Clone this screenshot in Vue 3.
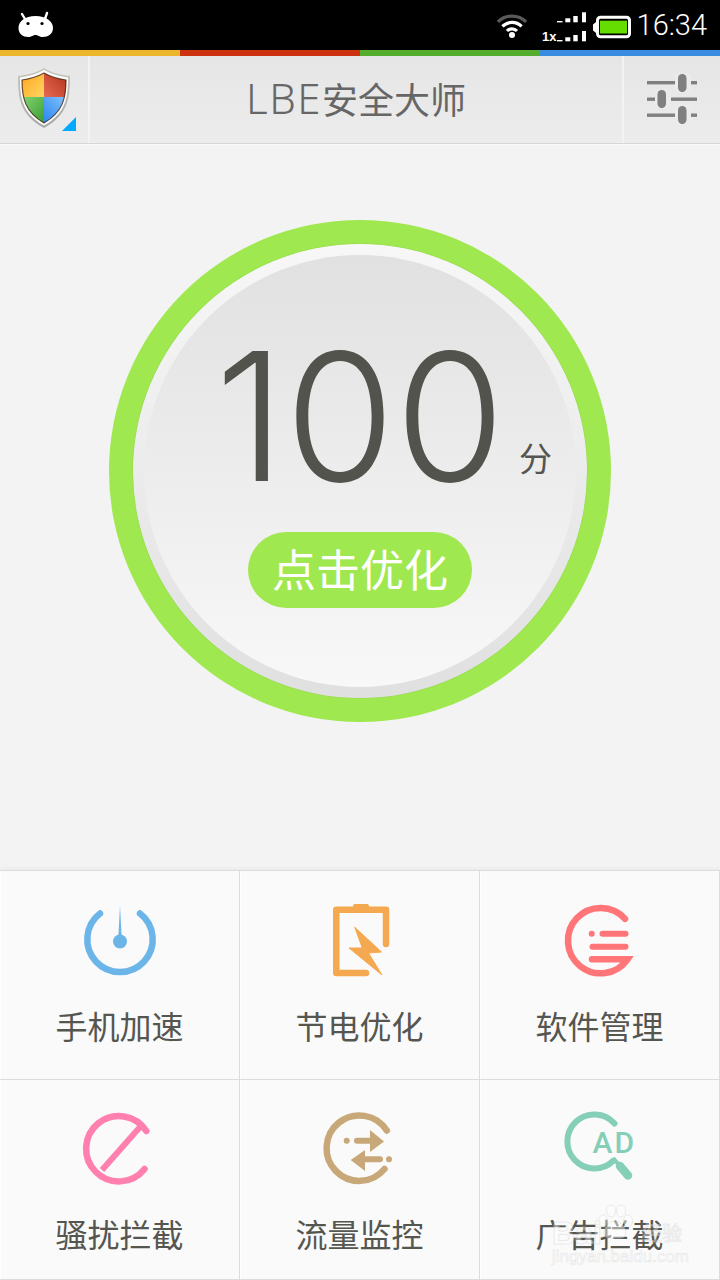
<template>
  <div class="phone">
    <div class="status-bar">
      <svg class="droid" width="36" height="28" viewBox="0 0 36 28">
        <path d="M7 8 4 3M27 8l2-6" stroke="#fff" stroke-width="2.4" stroke-linecap="round" />
        <path d="M.5 17C.5 10 7 5 17.5 5S35 10 35 17c0 6-5 9-10 9-4 0-5-2-7.500-2S14 26 10 26C5 26 .5 23 .5 17Z" fill="#fff" />
        <circle cx="10" cy="12.500" r="1.600" fill="#000" />
        <circle cx="24" cy="12.500" r="1.600" fill="#000" />
      </svg>
      <svg class="wifi" width="34" height="26" viewBox="0 0 34 26" fill="none" stroke-width="3.200">
        <path d="M2.900 8.900a20 20 0 0 1 28.200 0" stroke="#5a5a5a" />
        <path d="M7.400 13.400a13.500 13.500 0 0 1 19.200 0" stroke="#fff" />
        <path d="M12 18a7 7 0 0 1 10 0" stroke="#fff" />
        <circle cx="17" cy="22" r="3" fill="#fff" />
      </svg>
      <svg class="signal" width="45" height="34" viewBox="0 0 45 34" fill="#fff">
        <rect x="15" y="9" width="5.500" height="1.400" />
        <rect x="23.300" y="6.300" width="5" height="4" />
        <rect x="31.300" y="4" width="4.400" height="6.300" />
        <rect x="40" y="0.300" width="4" height="10" />
        <rect x="15" y="28" width="5.500" height="1.400" />
        <rect x="23.300" y="25.300" width="5" height="4" />
        <rect x="31.300" y="23" width="4.400" height="6.300" />
        <rect x="40" y="19" width="4" height="10.300" />
        <text x="0" y="29" class="signal-label">1x</text>
      </svg>
      <svg class="battery" width="38" height="24" viewBox="0 0 38 24">
        <path d="M0 9.500 3 7v11l-3-2.500Z" fill="#fff" />
        <rect x="4.500" y="2.200" width="32" height="19.600" rx="3" fill="none" stroke="#fff" stroke-width="3" />
        <rect x="7" y="5.700" width="27" height="12.800" fill="#66dd00" />
      </svg>
      <span class="clock">16:34</span>
    </div>

    <div class="color-strip">
      <i class="yellow"></i><i class="red"></i><i class="green"></i><i class="blue"></i>
    </div>

    <header class="app-header">
      <div class="logo-btn">
        <svg width="52" height="60" viewBox="0 0 52 60">
          <defs>
            <linearGradient id="rim" x1="0" y1="0" x2="0" y2="1">
              <stop offset="0" stop-color="#c8c8c0" />
              <stop offset="1" stop-color="#a8a8a8" />
            </linearGradient>
            <linearGradient id="q1" x1="0" y1="0" x2="1" y2="1">
              <stop offset="0" stop-color="#ff9a10" />
              <stop offset="1" stop-color="#ffd763" />
            </linearGradient>
            <linearGradient id="q2" x1="1" y1="0" x2="0" y2="1">
              <stop offset="0" stop-color="#a92810" />
              <stop offset="1" stop-color="#e86a52" />
            </linearGradient>
            <linearGradient id="q3" x1="0" y1="0" x2="1" y2="1">
              <stop offset="0" stop-color="#8ad878" />
              <stop offset="1" stop-color="#33982c" />
            </linearGradient>
            <linearGradient id="q4" x1="1" y1="0" x2="0" y2="1">
              <stop offset="0" stop-color="#8cc8ff" />
              <stop offset="1" stop-color="#2080ee" />
            </linearGradient>
            <clipPath id="shield-clip">
              <path d="M26 5C33 9 41 11 48 12 48 30 45 44 26 55 7 44 4 30 4 12 11 11 19 9 26 5Z" />
            </clipPath>
          </defs>
          <path d="M26 0C34 5 43 7 52 8 52 30 50 47 26 60 2 47 0 30 0 8 9 7 18 5 26 0Z" fill="url(#rim)" />
          <path d="M26 2C34 6.500 42 8.500 50 9.500 50 30 48 45 26 57.500 4 45 2 30 2 9.500 10 8.500 18 6.500 26 2Z" fill="#fff" />
          <g clip-path="url(#shield-clip)">
            <rect x="0" y="0" width="26" height="29" fill="url(#q1)" />
            <rect x="26" y="0" width="26" height="29" fill="url(#q2)" />
            <rect x="0" y="29" width="26" height="31" fill="url(#q3)" />
            <rect x="26" y="29" width="26" height="31" fill="url(#q4)" />
          </g>
          <path d="M26 5C33 9 41 11 48 12 48 30 45 44 26 55 7 44 4 30 4 12 11 11 19 9 26 5Z" fill="none" stroke="#3a1a08" stroke-opacity=".75" stroke-width="1.200" />
        </svg>
        <span class="corner"></span>
      </div>
      <h1 class="app-title"><span class="latin">LBE</span>安全大师</h1>
      <div class="settings-btn">
        <svg width="50" height="52" viewBox="0 0 50 52" fill="#808080">
          <rect x="0" y="7" width="50" height="3.400" />
          <rect x="0" y="23.500" width="50" height="3.400" />
          <rect x="0" y="39.500" width="50" height="3.400" />
          <rect x="28" y="0" width="16" height="18" fill="#ebebeb" />
          <rect x="8" y="16" width="16" height="18" fill="#ebebeb" />
          <rect x="28" y="32" width="16" height="18" fill="#ebebeb" />
          <rect x="31" y="0" width="8.500" height="18" rx="4.200" />
          <rect x="10.500" y="16" width="8.500" height="18" rx="4.200" />
          <rect x="31" y="32" width="8.500" height="18" rx="4.200" />
        </svg>
      </div>
    </header>

    <main class="score-panel">
      <div class="ring">
        <div class="disc-outer">
          <div class="disc-inner">
            <div class="score-row">
              <span></span>
              <span class="score">100</span>
              <span class="unit">分</span>
            </div>
            <div class="optimize-btn">点击优化</div>
          </div>
        </div>
      </div>
    </main>

    <section class="tools">
      <div v-for="tool in tools" :key="tool.key" class="tool">
        <svg class="tool-icon" width="80" height="80" viewBox="0 0 80 80" fill="none" stroke-width="6.500" stroke-linecap="round" :style="{ color: tool.color }">
          <template v-if="tool.key === 'boost'">
            <path d="M20 13.500a32.700 32.700 0 1 0 40 0" stroke="currentColor" />
            <path d="M40 6l1.600 30h-3.200Z" fill="currentColor" />
            <circle cx="40" cy="41.500" r="7" fill="currentColor" />
          </template>
          <template v-else-if="tool.key === 'power'">
            <path d="M66 44V9.700H16.300V73H46" stroke="currentColor" stroke-linejoin="round" />
            <rect x="33" y="4" width="16" height="5" rx="2" fill="currentColor" />
            <path d="M35 27.500 61.500 52l-13 1L62 75 29 48h13Z" fill="currentColor" stroke="currentColor" stroke-width="1" stroke-linejoin="round" />
          </template>
          <template v-else-if="tool.key === 'apps'">
            <path d="M65 18.800A32.700 32.700 0 1 0 67.500 59.300H32" stroke="currentColor" />
            <circle cx="31.700" cy="33.700" r="3" fill="currentColor" />
            <path d="M42.500 33.700h23M32.500 46.700h33" stroke="currentColor" stroke-width="6" />
          </template>
          <template v-else-if="tool.key === 'block'">
            <path d="M66.300 23A32.700 32.700 0 1 0 64.500 61" stroke="currentColor" />
            <path d="M60 19 22 62" stroke="currentColor" stroke-linecap="butt" stroke-width="6" />
          </template>
          <template v-else-if="tool.key === 'traffic'">
            <path d="M66.800 22.500A32.700 32.700 0 1 0 64.500 61" stroke="currentColor" />
            <circle cx="26.700" cy="32.700" r="3" fill="currentColor" />
            <path d="M37 32.700h14M60 51.300H44" stroke="currentColor" stroke-width="6" />
            <path d="M50 22l14 11.500-14 10.500ZM45 42 30.700 52 45 63Z" fill="currentColor" />
            <circle cx="69" cy="51.300" r="3" fill="currentColor" />
          </template>
          <template v-else>
            <path d="M54.500 15.500A27 27 0 1 0 53 53" stroke="currentColor" stroke-width="6" />
            <path d="M53 50 60 58" stroke="currentColor" stroke-width="4" stroke-linecap="butt" />
            <path d="M60 58 68 67.500" stroke="currentColor" stroke-width="8.500" />
            <text x="32.500" y="45" class="ad-label" fill="currentColor">AD</text>
          </template>
        </svg>
        <span class="tool-name">{{ tool.name }}</span>
      </div>

      <div class="watermark">
        <svg class="paw" width="40" height="36" viewBox="0 0 40 36" fill="#fff" stroke="#d8d8d8">
          <ellipse cx="8" cy="17" rx="4.500" ry="6" />
          <ellipse cx="16" cy="7" rx="4.500" ry="6" />
          <ellipse cx="26" cy="7" rx="4.500" ry="6" />
          <ellipse cx="33" cy="17" rx="4.500" ry="6" />
          <path d="M20 17c6 0 11 7 11 12 0 6-7 5-11 5s-11 1-11-5c0-5 5-12 11-12Z" />
        </svg>
        <div class="wm-brand"><span>Bai</span><em>经验</em></div>
        <div class="wm-url">jingyan.baidu.com</div>
      </div>
    </section>
  </div>
</template>

<script setup>
const tools = [
  { key: 'boost', name: '手机加速', color: '#6bb5e8' },
  { key: 'power', name: '节电优化', color: '#f4a950' },
  { key: 'apps', name: '软件管理', color: '#ff7578' },
  { key: 'block', name: '骚扰拦截', color: '#ff80ae' },
  { key: 'traffic', name: '流量监控', color: '#c8a878' },
  { key: 'ads', name: '广告拦截', color: '#85ceb8' }
]
</script>

<style>
html, body {
  margin: 0;
  background: #f3f3f3;
}
</style>

<style scoped>
.phone {
  width: 720px;
  height: 1280px;
  display: flex;
  flex-direction: column;
  overflow: hidden;
  font-family: "Noto Sans CJK SC", "Liberation Sans", sans-serif;
  background: #f3f3f3;
}

.status-bar {
  height: 50px;
  flex: none;
  background: #000;
  display: flex;
  align-items: center;
  padding: 0 13px 0 18px;
  box-sizing: border-box;
}

.droid {
  margin-top: -1px;
}

.wifi {
  margin-left: auto;
  margin-top: 1px;
}

.signal {
  margin-left: 13px;
  margin-top: 7px;
}

.signal-label {
  font: bold 13px "Liberation Sans", sans-serif;
  fill: #fff;
}

.battery {
  margin-left: 6px;
  margin-top: 4px;
}

.clock {
  margin-left: 6px;
  color: #fff;
  font: 300 29px/50px Roboto, "Liberation Sans", sans-serif;
}

.color-strip {
  height: 6px;
  flex: none;
  display: flex;
}

.color-strip i {
  flex: 1;
}

.yellow { background: #ecb52c; }
.red { background: #cc3210; }
.green { background: #55ad2e; }
.blue { background: #3a8ce0; }

.app-header {
  height: 88px;
  flex: none;
  display: flex;
  box-sizing: border-box;
  background: linear-gradient(#e6e6e6, #ececec);
  border-bottom: 1px solid #d6d6d6;
  box-shadow: 0 1px 0 #fafafa;
}

.logo-btn {
  position: relative;
  width: 90px;
  box-sizing: border-box;
  border-right: 2px solid #f3f3f3;
  padding: 12px 0 0 18px;
}

.corner {
  position: absolute;
  left: 62px;
  top: 61px;
  width: 14px;
  height: 14px;
  background: #00aaff;
  clip-path: polygon(100% 0, 100% 100%, 0 100%);
}

.app-title {
  flex: 1;
  margin: 0;
  text-align: center;
  font-weight: 400;
  font-size: 36px;
  line-height: 84px;
  color: #666;
}

.latin {
  font: 300 42px/84px "Noto Sans", "Liberation Sans", sans-serif;
  letter-spacing: 1.500px;
}

.settings-btn {
  width: 98px;
  box-sizing: border-box;
  border-left: 2px solid #f3f3f3;
  padding: 18px 0 0 23px;
}

.score-panel {
  flex: 1;
  display: flex;
  justify-content: center;
  padding-top: 76px;
}

.ring {
  width: 502px;
  height: 502px;
  box-sizing: border-box;
  padding: 24px;
  border-radius: 50%;
  background: #a0e850;
}

.disc-outer {
  height: 454px;
  box-sizing: border-box;
  padding: 11px;
  border-radius: 50%;
  background: linear-gradient(#f7f7f7, #e0e0e0);
  box-shadow: 0 0 1px rgba(0, 0, 0, .25);
}

.disc-inner {
  height: 432px;
  box-sizing: border-box;
  padding-top: 71px;
  border-radius: 50%;
  display: flex;
  flex-direction: column;
  align-items: center;
  background: linear-gradient(#e1e1e1, #f8f8f8);
}

.score-row {
  width: 100%;
  display: grid;
  grid-template-columns: 1fr auto 1fr;
}

.score {
  font: 340 178px/182px Inter, "Liberation Sans", sans-serif;
  color: #52534c;
}

.unit {
  align-self: end;
  margin: 0 0 31px 14px;
  font-size: 33px;
  line-height: 40px;
  color: #55564f;
}

.optimize-btn {
  width: 224px;
  height: 76px;
  margin-top: 24px;
  border-radius: 38px;
  background: #a0e850;
  color: #fff;
  font-size: 44px;
  line-height: 72px;
  text-align: center;
}

.tools {
  position: relative;
  height: 410px;
  flex: none;
  box-sizing: border-box;
  border-top: 1px solid #dcdcdc;
  display: grid;
  grid-template-columns: repeat(3, 240px);
  grid-template-rows: 209px 200px;
  background: #fafafa;
  box-shadow: 0 -2px 3px rgba(0, 0, 0, .03);
}

.tool {
  display: flex;
  flex-direction: column;
  align-items: center;
  box-sizing: border-box;
  padding-top: 29px;
  border-right: 1px solid #dcdcdc;
  border-bottom: 1px solid #dcdcdc;
  box-shadow: inset 1px 0 0 #fff;
}

.tool:nth-child(n + 4) {
  padding-top: 28px;
}

.tool-icon {
  flex: none;
}

.tool-name {
  margin-top: 22px;
  font-size: 32px;
  line-height: 46px;
  color: #555650;
}

.ad-label {
  font: 500 30px Roboto, "Liberation Sans", sans-serif;
  letter-spacing: 2px;
}

.watermark {
  position: absolute;
  left: 552px;
  top: 333px;
  width: 130px;
  text-align: center;
  opacity: .45;
  pointer-events: none;
}

.paw {
  position: absolute;
  left: 43px;
  top: 0;
}

.wm-brand {
  position: relative;
  margin-top: 14px;
  display: flex;
  justify-content: space-between;
  font: bold 32px/30px "Liberation Sans", sans-serif;
  color: #fff;
  -webkit-text-stroke: 1px #d8d8d8;
}

.wm-brand em {
  font: 20px/30px "Noto Sans CJK SC", sans-serif;
}

.wm-url {
  font: 17px/18px "Liberation Sans", sans-serif;
  color: #fff;
  -webkit-text-stroke: .6px #d0d0d0;
  white-space: nowrap;
}
</style>
